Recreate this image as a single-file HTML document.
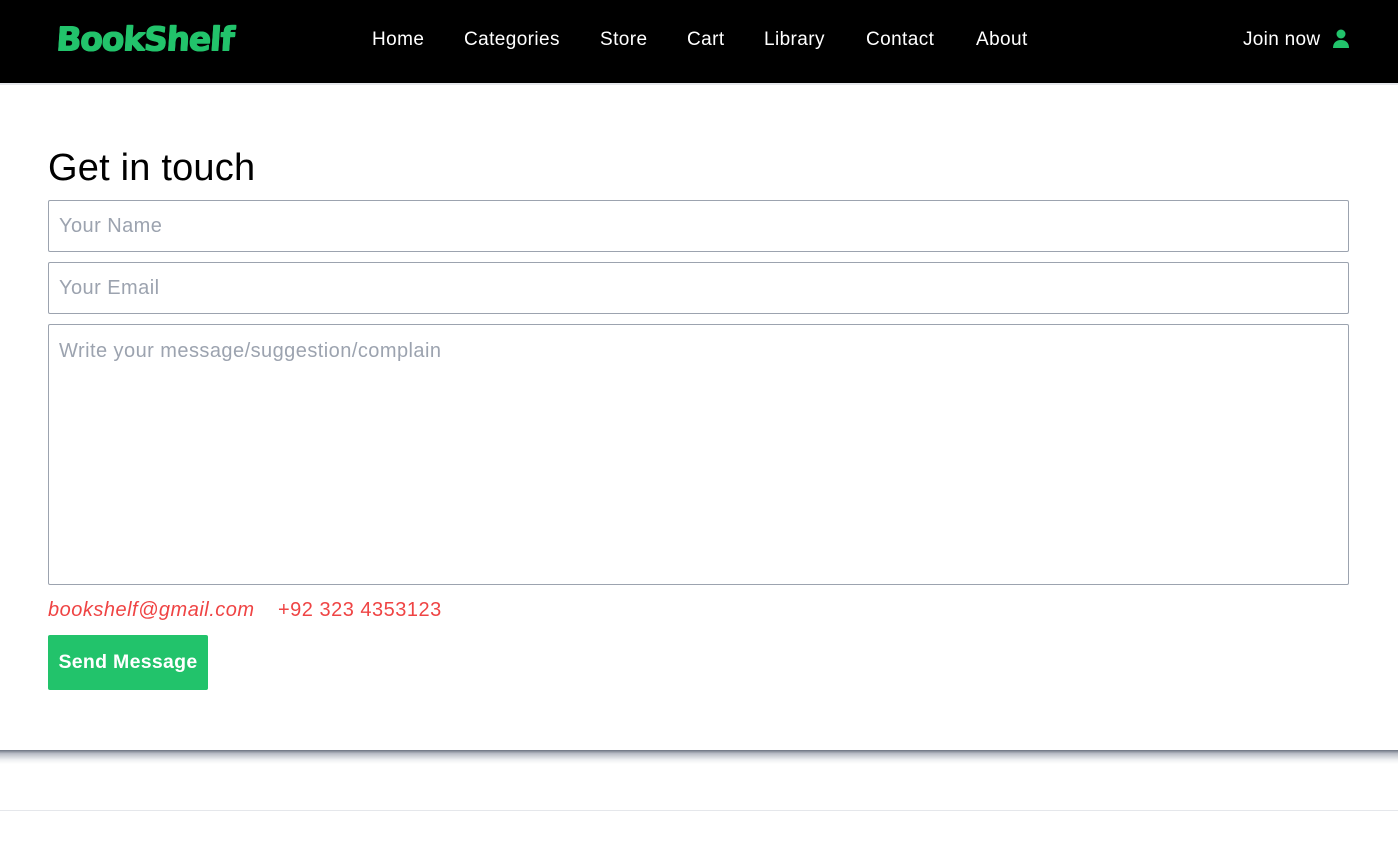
<!DOCTYPE html>
<html><head><meta charset="utf-8"><style>
*{margin:0;padding:0;box-sizing:border-box}
body{width:1398px;height:865px;background:#fff;font-family:"Liberation Sans",sans-serif;position:relative;overflow:hidden}
.hdr{position:absolute;left:0;top:0;width:1398px;height:85px;background:#000;border-bottom:2px solid #e5e7eb}
.logo{position:absolute;left:56px;top:19px;font-family:"DejaVu Sans",sans-serif;font-weight:bold;font-size:33px;color:#22c36b;letter-spacing:-1.2px;transform:skewX(-4deg);text-shadow:1px 0 0 #22c36b,0 1px 0 #22c36b,1px 1px 0 #22c36b}
.nav a{position:absolute;top:29px;color:#fff;font-size:19px;letter-spacing:0.4px;text-decoration:none}
.join{position:absolute;left:1243px;top:29px;color:#fff;font-size:19px;letter-spacing:0.3px}
h1{position:absolute;left:48px;top:147px;font-size:38px;font-weight:normal;color:#000;letter-spacing:0.2px}
.f{position:absolute;left:48px;width:1301px;border:1px solid #9ca3af;border-radius:2px;color:#9ca3af;font-size:20px;letter-spacing:0.45px;padding:14px 10px}
.c{position:absolute;top:599px;color:#ef4444;font-size:20px;letter-spacing:0.5px}
.btn{position:absolute;left:48px;top:635px;width:160px;height:55px;background:#22c36b;color:#fff;font-size:19.5px;letter-spacing:0.3px;font-weight:bold;line-height:55px;text-align:center;border-radius:2px}
.sh{position:absolute;left:0;top:750px;width:1398px;height:14px;background:linear-gradient(#6b7280,#b8bcc5 25%,#eef0f2 70%,#fff)}
.ln{position:absolute;left:0;top:810px;width:1398px;height:1px;background:#e5e7eb}
</style></head><body>
<div class="hdr">
<div class="logo">BookShelf</div>
<div class="nav">
<a style="left:372px">Home</a><a style="left:464px">Categories</a><a style="left:600px">Store</a><a style="left:687px">Cart</a><a style="left:764px">Library</a><a style="left:866px">Contact</a><a style="left:976px">About</a>
</div>
<div class="join">Join now</div>
<svg style="position:absolute;left:1332px;top:29px" width="18" height="20" viewBox="0 0 18 20"><circle cx="9" cy="5" r="4.5" fill="#22c36b"/><path d="M1 19c0-5 3-8 8-8s8 3 8 8z" fill="#22c36b"/></svg>
</div>
<h1>Get in touch</h1>
<div class="f" style="top:200px;height:52px">Your Name</div>
<div class="f" style="top:262px;height:52px">Your Email</div>
<div class="f" style="top:324px;height:261px;padding-top:15px">Write your message/suggestion/complain</div>
<div class="c" style="left:48px;font-style:italic">bookshelf@gmail.com</div>
<div class="c" style="left:278px">+92 323 4353123</div>
<div class="btn">Send Message</div>
<div class="sh"></div>
<div class="ln"></div>
</body></html>
